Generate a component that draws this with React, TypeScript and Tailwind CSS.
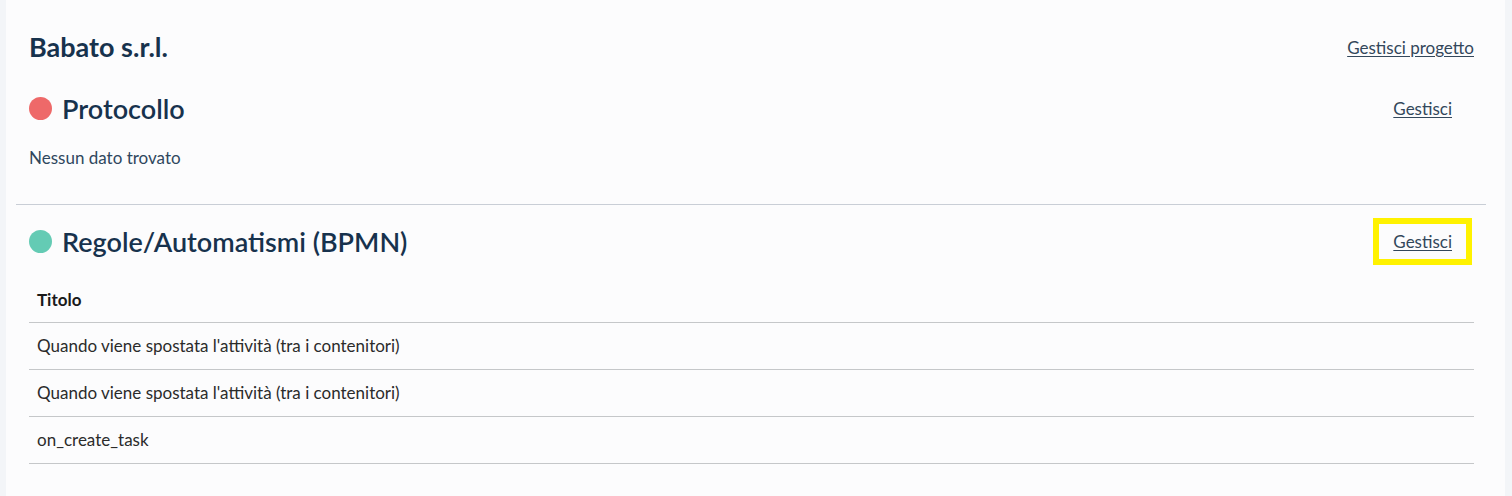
export default function App() {
  const rows = [
    "Quando viene spostata l'attività (tra i contenitori)",
    "Quando viene spostata l'attività (tra i contenitori)",
    "on_create_task",
  ];

  return (
    <div
      className="min-h-[496px] bg-[#f3f5f8] pl-[6px] pr-[7px]"
      style={{ fontFamily: "Lato, 'Noto Sans', sans-serif" }}
    >
      <div className="min-h-[496px] bg-[#fcfcfd] pl-[23px] pr-[31px] pt-[30px]">
        {/* Project header */}
        <div className="flex items-center justify-between h-[32px]">
          <h1 className="text-[27px] font-bold text-[#17324d] leading-none">Babato s.r.l.</h1>
          <a href="#" className="text-[17px] text-[#33475b] underline underline-offset-2 pt-[3px]">
            Gestisci progetto
          </a>
        </div>

        {/* Protocollo */}
        <div className="mt-[23px] flex items-center justify-between h-[47px]">
          <div className="flex items-center gap-[10px]">
            <span className="w-[23px] h-[23px] rounded-full bg-[#ee6969]" />
            <h2 className="text-[27px] font-semibold text-[#17324d] leading-none">Protocollo</h2>
          </div>
          <a
            href="#"
            className="mr-[2px] border-[6px] border-transparent px-[14px] h-[47px] flex items-center text-[17px] text-[#33475b] underline underline-offset-2"
          >
            Gestisci
          </a>
        </div>
        <p className="mt-[14px] text-[17px] leading-[24px] text-[#2f475e]">Nessun dato trovato</p>

        <div className="mt-[34px] -ml-[13px] -mr-[12px] border-t border-[#c9ced6]" />

        {/* Regole/Automatismi */}
        <div className="mt-[13px] flex items-center justify-between h-[47px]">
          <div className="flex items-center gap-[10px]">
            <span className="w-[23px] h-[23px] rounded-full bg-[#64cbb4]" />
            <h2 className="text-[27px] font-semibold text-[#17324d] leading-none">Regole/Automatismi (BPMN)</h2>
          </div>
          <a
            href="#"
            className="mr-[2px] border-[6px] border-[#fff200] px-[14px] h-[47px] flex items-center text-[17px] text-[#33475b] underline underline-offset-2"
          >
            Gestisci
          </a>
        </div>

        <table className="mt-[12px] w-full border-collapse">
          <thead>
            <tr className="border-b border-[#c5c7c9]">
              <th className="h-[45px] px-[8px] text-left text-[17px] font-bold text-[#1a1a1a]">Titolo</th>
            </tr>
          </thead>
          <tbody>
            {rows.map((r, i) => (
              <tr key={i} className="border-b border-[#c5c7c9]">
                <td className="h-[47px] px-[8px] text-[17px] text-[#2b2b2b]">{r}</td>
              </tr>
            ))}
          </tbody>
        </table>
      </div>
    </div>
  );
}
